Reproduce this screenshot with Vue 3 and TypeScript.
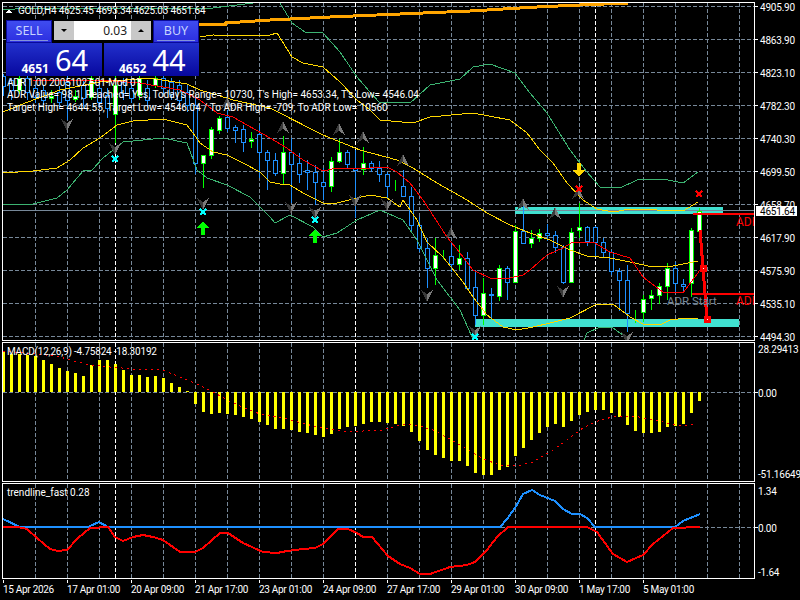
<script setup lang="ts">
// [top, bottom, wickTop, wickBottom, bullish] for each bar, 8px apart starting at x=3
type Candle = [number, number, number, number, boolean]

const raw: Candle[] = [
  [76, 86, 74, 96, false], [80, 90, 78, 100, false], [78, 90, 76, 94, true], [78, 92, 76, 100, false],
  [88, 97, 85, 103, false], [90, 100, 85, 105, false], [96, 98, 90, 103, true], [92, 102, 86, 108, false],
  [82, 100, 76, 120, false], [96, 99, 90, 102, true], [85, 98, 80, 108, false], [78, 97, 76, 100, true],
  [88, 102, 80, 108, false], [95, 108, 88, 118, false], [85, 114, 76, 143, true], [82, 93, 78, 100, false],
  [88, 98, 80, 103, false], [78, 95, 76, 100, true], [88, 100, 80, 108, false], [78, 85, 76, 88, true],
  [78, 88, 76, 94, false], [82, 94, 78, 100, false], [85, 100, 80, 108, false], [92, 105, 85, 112, false],
  [105, 163, 96, 174, false], [155, 163, 155, 188, true], [129, 155, 127, 159, true], [118, 130, 116, 134, true],
  [117, 128, 110, 132, false], [127, 130, 125, 143, false], [129, 142, 125, 152, false], [139, 141, 132, 148, true],
  [134, 152, 125, 178, false], [152, 160, 150, 190, false], [160, 173, 153, 176, false], [152, 173, 136, 184, true],
  [152, 164, 138, 203, false], [163, 174, 153, 183, false], [170, 172, 160, 190, false], [172, 182, 165, 205, false],
  [182, 186, 168, 200, false], [161, 186, 157, 192, true], [152, 161, 139, 163, true], [152, 164, 150, 168, false],
  [168, 170, 150, 218, false], [163, 169, 147, 175, true], [163, 168, 161, 172, false], [168, 174, 161, 182, false],
  [174, 186, 172, 198, false], [187, 187, 180, 191, true], [186, 196, 170, 197, false], [196, 225, 187, 233, false],
  [225, 248, 217, 252, false], [248, 268, 238, 288, false], [255, 268, 238, 285, true], [255, 255, 250, 259, true],
  [256, 264, 242, 272, false], [258, 264, 245, 270, true], [258, 288, 252, 290, false], [287, 315, 270, 325, false],
  [293, 315, 278, 325, true], [294, 295, 288, 318, false], [268, 296, 265, 301, true], [268, 282, 266, 300, false],
  [231, 282, 225, 283, true], [231, 243, 205, 244, false], [238, 243, 230, 248, true], [233, 238, 229, 242, true],
  [233, 235, 224, 241, false], [235, 247, 231, 253, false], [247, 282, 245, 284, false], [232, 282, 228, 283, true],
  [227, 230, 203, 238, true], [227, 241, 226, 246, false], [227, 242, 226, 257, false], [242, 252, 238, 258, false],
  [252, 271, 250, 275, false], [271, 280, 268, 311, false], [280, 313, 265, 332, false], [313, 313, 310, 323, true],
  [299, 312, 295, 322, true], [295, 298, 290, 310, true], [286, 295, 283, 304, true], [268, 286, 263, 300, true],
  [268, 283, 262, 293, false], [284, 286, 279, 292, false], [230, 283, 228, 297, true], [211, 231, 208, 232, true],
]

const candles = raw.map(([top, bottom, wickTop, wickBottom, bull], i) => ({
  x: 3.5 + i * 8, top, bottom, wickTop, wickBottom, bull,
}))

// 32px grid, plus the two period separators that fall off it
const gridX = Array.from({ length: 23 }, (_, i) => 35.5 + i * 32)
const separators = [115.5, 355.5, 595.5]
const gridY = Array.from({ length: 11 }, (_, i) => 6.5 + i * 33)

const yellowUpper = '200,37 213,35 248,36 270,35 277,33 292,57 303,63 323,67 340,82 357,100 370,110 380,120 413,123 430,117 473,113 510,120 527,133 540,150 553,163 567,183 583,200 597,209 613,212 630,209 657,210 683,211 698,202'
const yellowMid = '3,112 20,105 60,90 100,82 150,78 187,84 200,90 217,95 233,100 270,108 323,135 360,150 397,160 413,168 437,183 467,200 487,213 510,225 530,233 550,240 570,250 587,256 610,258 630,262 653,267 673,266 698,261'
const yellowLower = '3,173 33,171 57,168 70,160 83,148 100,138 117,125 133,121 163,119 187,125 193,133 200,143 213,152 227,155 243,163 260,172 270,182 280,184 290,185 303,193 323,203 337,203 357,198 370,195 387,198 400,207 403,200 417,220 427,242 443,257 463,282 473,297 487,315 503,327 517,330 533,327 550,323 570,318 597,304 613,304 630,317 643,324 660,325 670,320 687,318 698,318'
const greenUpper = '3,10 28,8 213,8 245,4 270,1 280,3 292,23 305,32 323,33 340,52 357,77 370,92 380,103 397,102 410,103 430,85 460,79 473,67 490,64 515,73 530,93 547,113 570,150 587,172 600,187 620,188 637,180 663,179 683,183 698,172'
const greenLower = '3,204 33,204 57,198 67,190 83,171 92,170 103,158 123,142 163,138 187,143 197,170 207,178 227,185 250,197 270,217 275,223 290,215 313,227 323,237 337,233 357,220 380,210 403,220 417,240 437,280 460,310 472,337 480,350 580,350 587,333 600,327 613,328 627,338 640,350'
const redMa = '33,80 100,80 140,83 180,90 200,100 217,113 233,117 270,138 287,148 303,160 323,171 337,168 353,169 387,167 397,172 410,183 423,200 447,237 460,253 473,270 490,278 510,278 523,275 530,270 547,255 563,248 573,242 593,242 610,252 630,258 643,277 663,292 683,293 700,270'
const orange = '198,24 225,24 225,23 270,20 330,17 400,14 470,11 537,7 580,5 628,3'
const adrPath = '700,230 703,268 707,320'

const greyArrows = [
  { x: 227, y: 103, up: true }, { x: 283, y: 127, up: true }, { x: 339, y: 129, up: true }, { x: 363, y: 137, up: true },
  { x: 403, y: 160, up: true }, { x: 523, y: 204, up: true }, { x: 451, y: 233, up: true }, { x: 555, y: 213, up: true },
  { x: 578, y: 193, up: true }, { x: 67, y: 125, up: false }, { x: 115, y: 149, up: false }, { x: 203, y: 204, up: false },
  { x: 291, y: 208, up: false }, { x: 315, y: 213, up: false }, { x: 355, y: 201, up: false }, { x: 387, y: 205, up: false },
  { x: 427, y: 296, up: false }, { x: 475, y: 332, up: false }, { x: 563, y: 292, up: false }, { x: 627, y: 338, up: false },
]
const cyanCrosses = [[115, 159], [203, 212], [315, 220], [475, 337]]
const redCrosses = [[579, 189], [699, 194]]
const upArrows = [[203, 228], [315, 236]]

const priceLabels = [
  '4905.90', '4863.90', '4823.10', '4782.30', '4740.30', '4699.50',
  '4658.70', '4617.90', '4575.90', '4535.10', '4494.30',
].map((text, i) => ({ text, y: 6.5 + i * 33 }))

const macdEnds = [
  351, 354, 354, 355, 356, 360, 364, 368, 371, 373, 376, 365, 360, 360, 364, 370, 375, 375, 377, 376, 378, 383, 387, 391,
  404, 412, 414, 413, 414, 415, 417, 419, 422, 425, 429, 429, 430, 432, 433, 435, 437, 434, 429, 427, 426, 424, 422, 422, 423, 424,
  426, 432, 441, 450, 455, 458, 461, 461, 466, 473, 475, 475, 470, 467, 456, 448, 440, 433, 427, 424, 427, 421, 415, 412, 410, 410,
  413, 417, 425, 431, 433, 433, 432, 427, 426, 424, 413, 401,
]
const macdBars = macdEnds.map((end, i) => ({
  x: 2 + i * 8,
  y: Math.min(end, 392),
  h: Math.abs(end - 392),
}))
const macdSignal = '3,351 57,356 70,360 90,365 110,367 133,369 163,370 180,377 197,384 213,392 233,403 260,414 287,419 317,427 340,431 363,431 383,430 403,424 420,426 433,430 450,439 467,449 483,459 500,465 517,466 533,462 550,452 567,440 583,428 600,420 617,416 633,416 650,419 667,423 683,426 695,424'

const trendBlue = '3,519 20,527 88,527 99,522 108,527 500,527 507,519 515,508 523,494 532,490 540,495 555,501 563,509 572,514 580,514 587,518 595,527 675,527 683,521 700,514'
const trendRed = '3,527 18,527 27,529 37,538 50,549 58,551 67,550 78,538 90,528 108,527 115,537 123,541 133,537 143,535 153,537 163,540 180,552 195,552 203,548 220,533 228,533 243,543 263,552 277,553 287,551 303,549 315,548 323,544 338,529 348,529 357,533 363,537 372,537 388,556 400,564 410,568 420,574 430,574 450,567 467,565 475,562 487,550 497,537 508,527 587,527 597,532 613,554 627,562 643,555 653,544 673,528 700,527'

const timeLabels = [
  '15 Apr 2026', '17 Apr 01:00', '20 Apr 09:00', '21 Apr 17:00', '23 Apr 01:00', '24 Apr 09:00',
  '27 Apr 17:00', '29 Apr 01:00', '30 Apr 09:00', '1 May 17:00', '5 May 01:00',
]
</script>

<template>
  <div class="terminal">
    <div class="pane">
      <div class="plot plot-main">
        <svg viewBox="3 3 751 337" width="751" height="337">
          <line v-for="x in gridX" :key="x" :x1="x" :x2="x" y1="3" y2="340" class="grid" />
          <line v-for="y in gridY" :key="y" x1="3" x2="754" :y1="y" :y2="y" class="grid" />
          <line v-for="x in separators" :key="x" :x1="x" :x2="x" y1="3" y2="340" class="sep" />

          <rect x="515" y="207" width="208" height="7" fill="#40e0d0" />
          <rect x="475" y="319" width="264" height="8" fill="#40e0d0" />
          <line x1="3" x2="754" y1="210.5" y2="210.5" stroke="#778899" />

          <g v-for="c in candles" :key="c.x">
            <line :x1="c.x" :x2="c.x" :y1="c.wickTop" :y2="c.wickBottom" :stroke="c.bull ? '#00ff00' : '#1e90ff'" />
            <rect
              :x="c.x - 2" :y="c.top + 0.5" width="4" :height="Math.max(c.bottom - c.top, 0)"
              :fill="c.bull ? '#ffffff' : '#000000'" :stroke="c.bull ? '#00ff00' : '#1e90ff'"
            />
          </g>

          <polyline :points="greenUpper" class="line" stroke="#3cb371" />
          <polyline :points="greenLower" class="line" stroke="#3cb371" />
          <polyline :points="yellowUpper" class="line" stroke="#ffd700" />
          <polyline :points="yellowMid" class="line" stroke="#ffd700" />
          <polyline :points="yellowLower" class="line" stroke="#ffd700" />
          <polyline :points="redMa" class="line" stroke="#ff0000" />
          <polyline :points="orange" class="line" stroke="#ffa500" stroke-width="3" />

          <g v-for="(a, i) in greyArrows" :key="i" :transform="`translate(${a.x} ${a.y}) scale(1 ${a.up ? 1 : -1})`">
            <polygon points="0,-6 -6,6 0,2" fill="#3a3a3a" />
            <polygon points="0,-6 6,6 0,2" fill="#7a7a7a" />
          </g>

          <g v-for="p in cyanCrosses" :key="p[0]" :transform="`translate(${p[0]} ${p[1]})`" stroke="#00ffff" stroke-width="2">
            <line x1="-3" x2="3" y1="-3" y2="3" />
            <line x1="3" x2="-3" y1="-3" y2="3" />
          </g>
          <g v-for="p in redCrosses" :key="p[0]" :transform="`translate(${p[0]} ${p[1]})`" stroke="#ff0000" stroke-width="2">
            <line x1="-3" x2="3" y1="-3" y2="3" />
            <line x1="3" x2="-3" y1="-3" y2="3" />
          </g>
          <polygon
            v-for="p in upArrows" :key="p[0]" :transform="`translate(${p[0]} ${p[1]})`"
            points="0,-7 6,0 2,0 2,7 -2,7 -2,0 -6,0" fill="#00ff00"
          />
          <polygon transform="translate(579 170)" points="0,7 6,0 2,0 2,-7 -2,-7 -2,0 -6,0" fill="#ffd700" />

          <line x1="693" x2="754" y1="214" y2="214" stroke="#ff0000" stroke-width="2" />
          <line x1="692" x2="754" y1="294" y2="294" stroke="#ff0000" stroke-width="2" />
          <polyline :points="adrPath" class="line" stroke="#ff0000" stroke-width="3" />
          <rect x="700" y="265" width="7" height="7" fill="#ff0000" />
          <rect x="704" y="316" width="7" height="7" fill="#ff0000" />
          <rect x="703" y="268" width="1" height="1" fill="#ffffff" />
          <rect x="707" y="319" width="1" height="1" fill="#ffffff" />

          <text x="736" y="226" class="adr-tag">ADR</text>
          <text x="736" y="305" class="adr-tag">ADR</text>
          <text x="667" y="305" class="adr-start">ADR Start</text>

          <polygon points="6,13 9,9 12,13" fill="#ffffff" />
          <text x="18" y="14" class="legend tight">GOLD,H4 4625.45 4693.34 4625.03 4651.64</text>
          <text x="7" y="86" class="legend tight">ADR 1.00 20051027-01-Mod 01</text>
          <text x="7" y="98" class="legend">ADR Value= 98.1, Reached= Yes, Today's Range= 10730, T's High= 4653.34, T's Low= 4546.04</text>
          <text x="7" y="111" class="legend">Target High= 4644.55, Target Low= 4546.04 / To ADR High= -709, To ADR Low= 10560</text>
        </svg>
      </div>
      <svg class="axis" viewBox="755 2 45 339" width="45" height="339">
        <g v-for="p in priceLabels" :key="p.text">
          <line x1="755" x2="758" :y1="p.y" :y2="p.y" stroke="#ffffff" />
          <text x="760" :y="p.y + 4" class="legend tight">{{ p.text }}</text>
        </g>
        <rect x="756" y="206" width="41" height="10" fill="#ffffff" />
        <text x="760" y="214.500" class="bid tight">4651.64</text>
      </svg>
    </div>

    <div class="pane">
      <div class="plot plot-macd">
        <svg viewBox="3 343 751 138" width="751" height="138">
          <line v-for="x in gridX" :key="x" :x1="x" :x2="x" y1="343" y2="481" class="grid" />
          <line x1="3" x2="754" y1="392.5" y2="392.5" class="grid" />
          <line v-for="x in separators" :key="x" :x1="x" :x2="x" y1="343" y2="481" class="sep" />
          <rect v-for="b in macdBars" :key="b.x" :x="b.x" :y="b.y" width="3" :height="b.h" fill="#ffff00" />
          <polyline :points="macdSignal" class="line dotted" stroke="#ff0000" />
          <text x="7" y="355" class="legend tight">MACD(12,26,9) -4.75824 -18.30192</text>
        </svg>
      </div>
      <svg class="axis" viewBox="755 342 45 140" width="45" height="140">
        <text x="758" y="353" class="legend tight">28.29413</text>
        <line x1="755" x2="758" y1="392.5" y2="392.5" stroke="#ffffff" />
        <text x="758" y="396.500" class="legend tight">0.00</text>
        <text x="758" y="478" class="legend tight">-51.16649</text>
      </svg>
    </div>

    <div class="pane">
      <div class="plot plot-trend">
        <svg viewBox="3 484 751 94" width="751" height="94">
          <line v-for="x in gridX" :key="x" :x1="x" :x2="x" y1="484" y2="578" class="grid" />
          <line x1="3" x2="754" y1="527.5" y2="527.5" class="grid" />
          <line v-for="x in separators" :key="x" :x1="x" :x2="x" y1="484" y2="578" class="sep" />
          <polyline :points="trendBlue" class="line" stroke="#1e90ff" stroke-width="2" />
          <polyline :points="trendRed" class="line" stroke="#ff0000" stroke-width="2" />
          <text x="7" y="496" class="legend">trendline_fast 0.28</text>
        </svg>
      </div>
      <svg class="axis" viewBox="755 483 45 96" width="45" height="96">
        <text x="758" y="495" class="legend tight">1.34</text>
        <line x1="755" x2="758" y1="527.5" y2="527.5" stroke="#ffffff" />
        <text x="758" y="531.500" class="legend tight">0.00</text>
        <text x="758" y="576" class="legend tight">-1.64</text>
      </svg>
    </div>

    <div class="time-axis">
      <span v-for="t in timeLabels" :key="t" class="time-label">{{ t }}</span>
    </div>

    <!-- one click trading box, sits over the chart -->
    <div class="trade-panel">
      <div class="trade-row">
        <div class="side-btn"><span>SELL</span></div>
        <div class="lot">
          <span class="lot-step"><i class="tri-down"></i></span>
          <span class="lot-value">0.03</span>
          <span class="lot-step"><i class="tri-up"></i></span>
        </div>
        <div class="side-btn"><span>BUY</span></div>
      </div>
      <div class="trade-row prices">
        <div class="price-box"><b>4651</b><span>64</span></div>
        <div class="price-box"><b>4652</b><span>44</span></div>
      </div>
    </div>
  </div>
</template>

<style scoped>
.terminal {
  position: relative;
  width: 800px;
  height: 600px;
  box-sizing: border-box;
  padding: 2px 0 0 2px;
  background: #000;
  display: flex;
  flex-direction: column;
  gap: 1px;
  overflow: hidden;
  font-family: Roboto, "Liberation Sans", sans-serif;
}

.pane {
  display: flex;
}

.plot {
  box-sizing: border-box;
  width: 753px;
  border: 1px solid #fff;
}

.plot svg,
.axis {
  display: block;
  shape-rendering: crispEdges;
}

.plot-main {
  height: 339px;
}

.plot-macd {
  height: 140px;
}

.plot-trend {
  height: 96px;
}

.grid {
  stroke: #778899;
  stroke-dasharray: 4 2;
}

.sep {
  stroke: #fff;
  stroke-dasharray: 4 2;
}

.line {
  fill: none;
}

.dotted {
  stroke-dasharray: 2 4;
}

text {
  font-family: Roboto, "Liberation Sans", sans-serif;
}

.legend {
  font-size: 10px;
  fill: #fff;
}

.tight {
  letter-spacing: -0.2px;
}

.bid {
  font-size: 10px;
  fill: #000;
}

.adr-tag {
  font-size: 12px;
  fill: #ff0000;
}

.adr-start {
  font-size: 11.5px;
  fill: #778899;
}

.time-axis {
  display: flex;
  padding-left: 1px;
  color: #fff;
  font-size: 10px;
  letter-spacing: -0.3px;
}

.time-label {
  position: relative;
  flex: 0 0 64px;
  padding-top: 4px;
  white-space: nowrap;
}

.time-label::before {
  content: "";
  position: absolute;
  left: 0;
  top: 0;
  width: 1px;
  height: 3px;
  background: #fff;
}

.trade-panel {
  position: absolute;
  left: 6px;
  top: 20px;
  width: 193px;
  background: #000;
  font-family: "Noto Sans", "Liberation Sans", sans-serif;
}

.trade-row {
  display: flex;
  gap: 1px;
}

.side-btn {
  box-sizing: border-box;
  flex: 0 0 46px;
  height: 23px;
  border: 1px solid #0a0a9c;
  background: linear-gradient(#3f4cf0, #2c2fe0);
  color: #c8d4ff;
  font-size: 12.5px;
  display: flex;
  align-items: flex-start;
  justify-content: center;
  padding: 1px 3px 0;
}

.side-btn span {
  flex: 1;
  text-align: center;
  height: 18px;
  line-height: 17px;
  border-bottom: 1px solid #8494d8;
}

.lot {
  flex: 1;
  height: 21px;
  display: flex;
  background: #fff;
  border: 1px solid #000;
  box-sizing: border-box;
}

.lot-step {
  flex: 0 0 20px;
  background: #c8c8c8;
  display: flex;
  align-items: center;
  justify-content: center;
}

.tri-down,
.tri-up {
  width: 0;
  height: 0;
  border-left: 3px solid transparent;
  border-right: 3px solid transparent;
}

.tri-down {
  border-top: 3px solid #000;
}

.tri-up {
  border-bottom: 3px solid #000;
}

.lot-value {
  flex: 1;
  text-align: right;
  padding-right: 4px;
  color: #222;
  font-size: 12px;
  line-height: 19px;
}

.prices {
  gap: 2px;
}

.price-box {
  box-sizing: border-box;
  flex: 1;
  height: 33px;
  padding-left: 2px;
  display: flex;
  align-items: baseline;
  justify-content: center;
  gap: 6px;
  color: #fff;
  background: linear-gradient(#2230cc, #07089e);
  line-height: 33px;
}

.price-box b {
  font-size: 12px;
  position: relative;
  top: 2px;
}

.price-box span {
  font-size: 29px;
}
</style>

<style>
body {
  margin: 0;
  background: #000;
}
</style>
